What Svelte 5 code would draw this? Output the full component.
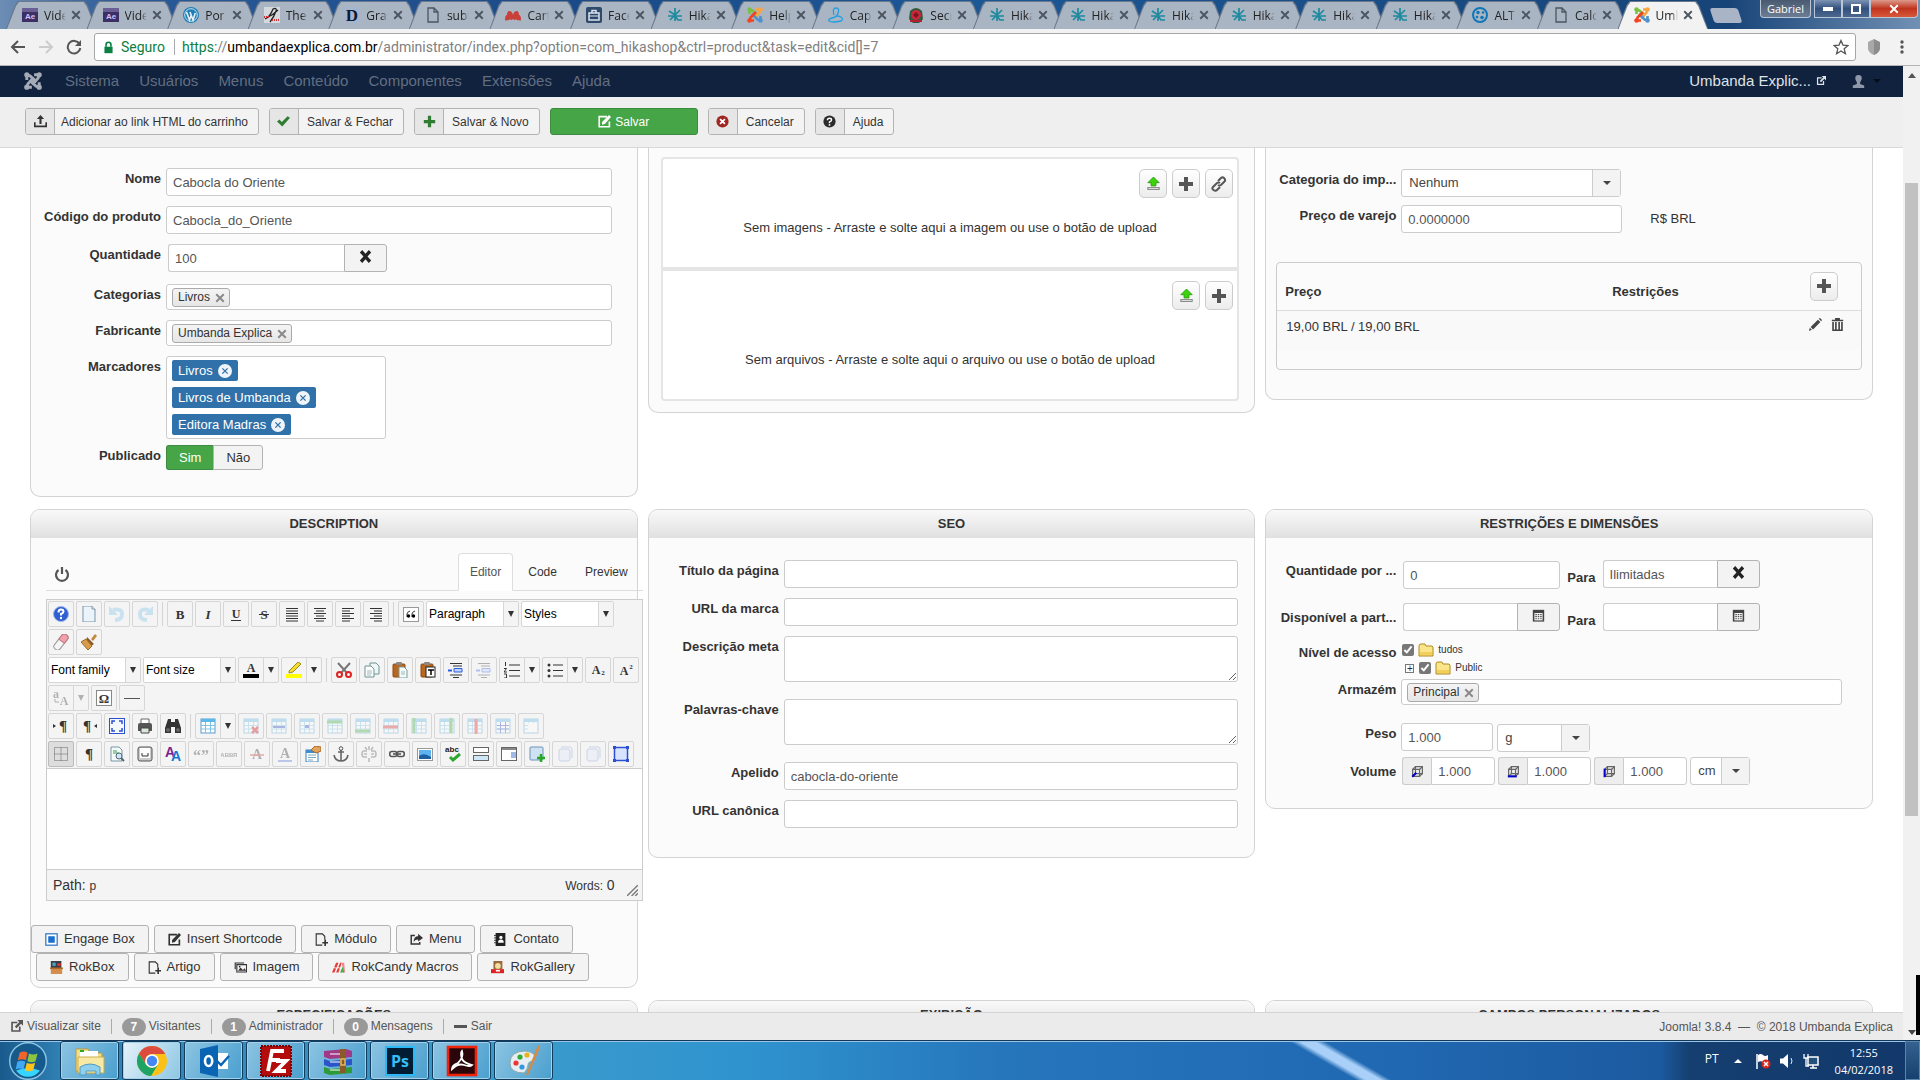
<script lang="ts">
  type Tool = { icon?: string; list?: string; split?: boolean; off?: boolean; active?: boolean; sep?: boolean };

  const browserTabs = [
    { icon: 'ae', title: 'Vide' },
    { icon: 'ae', title: 'Vide' },
    { icon: 'wordpress', title: 'Por' },
    { icon: 'script', title: 'The' },
    { icon: 'letterD', title: 'Gras' },
    { icon: 'page', title: 'subt' },
    { icon: 'cart', title: 'Cart' },
    { icon: 'bag', title: 'Face' },
    { icon: 'hika', title: 'Hika' },
    { icon: 'joomla', title: 'Help' },
    { icon: 'cap', title: 'Cap' },
    { icon: 'crest', title: 'Secr' },
    { icon: 'hika', title: 'Hika' },
    { icon: 'hika', title: 'Hika' },
    { icon: 'hika', title: 'Hika' },
    { icon: 'hika', title: 'Hika' },
    { icon: 'hika', title: 'Hika' },
    { icon: 'hika', title: 'Hika' },
    { icon: 'alt', title: 'ALT' },
    { icon: 'page', title: 'Calc' },
    { icon: 'joomla', title: 'Umb' }
  ];

  const menu = ['Sistema', 'Usuários', 'Menus', 'Conteúdo', 'Componentes', 'Extensões', 'Ajuda'];

  const sep: Tool = { sep: true };
  const toolRows: Tool[][] = [
    [
      { icon: 'help' }, { icon: 'newdoc' }, { icon: 'undo', off: true }, { icon: 'redo', off: true }, sep,
      { icon: 'bold' }, { icon: 'italic' }, { icon: 'underline' }, { icon: 'strike' },
      { icon: 'justify' }, { icon: 'center' }, { icon: 'left' }, { icon: 'right' }, sep,
      { icon: 'quote' }, { list: 'Paragraph' }, { list: 'Styles' }
    ],
    [{ icon: 'eraser' }, { icon: 'brush' }],
    [
      { list: 'Font family' }, { list: 'Font size' }, { icon: 'forecolor', split: true }, { icon: 'highlight', split: true }, sep,
      { icon: 'cut' }, { icon: 'copy' }, { icon: 'paste' }, { icon: 'pastetext' }, { icon: 'indent' }, { icon: 'indent', off: true },
      { icon: 'ol', split: true }, { icon: 'ul', split: true }, { icon: 'sub' }, { icon: 'sup' }
    ],
    [{ icon: 'textcase', split: true, off: true }, { icon: 'omega' }, { icon: 'rule' }],
    [
      { icon: 'ltr' }, { icon: 'rtl' }, { icon: 'fullscreen' }, { icon: 'print' }, { icon: 'find' }, sep,
      { icon: 'table', split: true }, { icon: 'tabledel', off: true }, { icon: 'tablerow', off: true }, { icon: 'tablecell', off: true },
      { icon: 'rowbefore', off: true }, { icon: 'rowafter', off: true }, { icon: 'rowdel', off: true }, { icon: 'colbefore', off: true },
      { icon: 'colafter', off: true }, { icon: 'coldel', off: true }, { icon: 'tablesplit', off: true }, { icon: 'tablemerge', off: true }
    ],
    [
      { icon: 'guides', active: true }, { icon: 'pilcrow' }, { icon: 'preview' }, { icon: 'nbsp' }, { icon: 'styleprops' },
      { icon: 'cite', off: true }, { icon: 'abbr', off: true }, { icon: 'del', off: true }, { icon: 'ins', off: true }, { icon: 'attribs' },
      { icon: 'anchor' }, { icon: 'unlink', off: true }, { icon: 'chain' }, { icon: 'picture' }, { icon: 'spell' },
      { icon: 'pagebreak' }, { icon: 'readmore' }, { icon: 'layeradd' }, { icon: 'layer', off: true }, { icon: 'layer', off: true }, { icon: 'layerabs' }
    ]
  ];

  const insertRows = [
    [
      { icon: 'engage', label: 'Engage Box' },
      { icon: 'edit', label: 'Insert Shortcode' },
      { icon: 'fileadd', label: 'Módulo' },
      { icon: 'share', label: 'Menu' },
      { icon: 'contact', label: 'Contato' }
    ],
    [
      { icon: 'rokbox', label: 'RokBox' },
      { icon: 'fileadd', label: 'Artigo' },
      { icon: 'image', label: 'Imagem' },
      { icon: 'candy', label: 'RokCandy Macros' },
      { icon: 'gallery', label: 'RokGallery' }
    ]
  ];

  const taskbar = ['explorer', 'chrome', 'outlook', 'filezilla', 'winrar', 'photoshop', 'acrobat', 'paint'];

  let publicado = $state('sim');

  const serif = 'font-family="Liberation Serif, serif" font-weight="bold" text-anchor="middle" fill="#333"';
  const grid = '<rect x="1" y="1" width="14" height="14" fill="#fff" stroke="#5a9cc8"/><rect x="1" y="1" width="14" height="3" fill="#5bb8ea"/><path d="M1 7.500h14M1 11h14M5.500 4v11M10.500 4v11" stroke="#7cc3e6"/>';
  const clip = '<rect x="1" y="2" width="12" height="13" rx="1" fill="#b8691f" stroke="#8c4a10"/><rect x="4" y="0" width="6" height="3" rx="1" fill="#888"/>';
  const joomlaArms = (a: string, b: string, c: string, d: string) =>
    `<g fill="none" stroke-width="2.600"><path d="M2.500 7V4.500q.500-2 3-1l5.500 5.500" stroke="${a}"/><path d="M9 2.500h2.500q2 .500 1 3L7 11" stroke="${b}"/><path d="M13.500 9v2.500q-.500 2-3 1L5 7" stroke="${c}"/><path d="M7 13.500H4.500q-2-.500-1-3L9 5" stroke="${d}"/></g><circle cx="2.500" cy="2.500" r="2.300" fill="${a}"/><circle cx="13.500" cy="2.500" r="2.300" fill="${b}"/><circle cx="13.500" cy="13.500" r="2.300" fill="${c}"/><circle cx="2.500" cy="13.500" r="2.300" fill="${d}"/>`;
  const cube = (edge: string) =>
    `<g fill="none" stroke="#666" stroke-width="1.500"><path d="M2 5.500h8.500v8.500H2z"/><path d="M5.500 2H14v8.500H5.500z"/><path d="M2 5.500L5.500 2M10.500 5.500L14 2M10.500 14L14 10.500M2 14l3.500-3.500"/></g><path d="${edge}" stroke="#0000d0" stroke-width="2.500"/>`;

  // every drawing uses a 16 by 16 box
  const icons: Record<string, string> = {
    ae: '<rect y="1" width="16" height="14" fill="#3b2f63"/><rect y="1" width="16" height="4" fill="#6a5f95"/><text x="8" y="12" font-size="8" font-weight="bold" text-anchor="middle" fill="#cfc3ff" font-family="Liberation Sans, sans-serif">Ae</text>',
    wordpress: '<circle cx="8" cy="8" r="8" fill="#1e7fb5"/><circle cx="8" cy="8" r="6.300" fill="none" stroke="#cfe2ee"/><path d="M3.500 5l3 8 1.800-5M7 5l3 8 2.300-7" fill="none" stroke="#e6f0f6" stroke-width="1.600"/>',
    script: '<rect width="16" height="16" fill="#d5d8dc"/><path d="M1 12q5-2 8-10 4-2 3 2-2 6-6 11M4 10q5-2 10-7" fill="none" stroke="#222" stroke-width="1.300"/><path d="M0 10h5M8 13h7" stroke="#c33" stroke-width="2" stroke-dasharray="1 1"/>',
    letterD: '<rect width="16" height="16" fill="#a3b5cf"/><text x="8" y="14" font-size="17" text-anchor="middle" font-weight="bold" fill="#101a33" font-family="Liberation Serif, serif">D</text>',
    page: '<path d="M3 1h6l4 4v10H3zM9 1v4h4" fill="none" stroke="#4c5560" stroke-width="1.300"/>',
    cart: '<path d="M0 13Q0 8 2 8q0-4 2.500-4Q7 4 8 8q1-4 3.500-4T14 8q2 0 2 5-1 1-2 0-2 1-3-1-1 2-3 0-2 2-3 0-1 2-3 1-1 1-2 0z" fill="#c9403a"/>',
    bag: '<rect width="16" height="16" rx="2" fill="#2e4a6b"/><path d="M3 6h10v7H3zM6 6V3.500h4V6" fill="none" stroke="#dbe4ee" stroke-width="1.500"/><path d="M3 9h10" stroke="#dbe4ee"/>',
    hika: '<path d="M8 1v13M2 4l6 4 5-5M1 9h14M8 8l-5 5M8 9l3 4h4" fill="none" stroke="#1d8a9f" stroke-width="1.700"/>',
    joomla: joomlaArms('#7ac143', '#f9a541', '#5091cd', '#f44321'),
    joomlaMono: joomlaArms('#a4abb7', '#a4abb7', '#a4abb7', '#a4abb7'),
    cap: '<path d="M6 8Q4 1 8 1t2 5q-1 4-6 5-4 1-3 3 3 2 12 0 3-2 0-4-4-2-6 0" fill="none" stroke="#1f9fe0" stroke-width="1.300"/>',
    crest: '<path d="M2 4q6-6 12 0l1 8-4 4H5l-4-4z" fill="#2d5a3a"/><circle cx="8" cy="8" r="5" fill="#c9283c"/><path d="M5 8l3-3 3 3-3 3z" fill="#7a1426"/><path d="M2 14h12" stroke="#b02030" stroke-width="2"/>',
    alt: '<circle cx="8" cy="8" r="7" fill="none" stroke="#0f76b8" stroke-width="2"/><g fill="#0f76b8"><circle cx="6" cy="5.500" r="1.700"/><circle cx="11" cy="5.500" r="1.300"/><circle cx="5" cy="10" r="1.300"/><circle cx="10" cy="10.500" r="1.800"/></g>',
    back: '<path d="M15 8H2M8 2L2 8l6 6" fill="none" stroke="#555" stroke-width="2"/>',
    forward: '<path d="M1 8h13M8 2l6 6-6 6" fill="none" stroke="#ccc" stroke-width="2"/>',
    reload: '<path d="M13.500 5A6.300 6.300 0 1 0 14.300 9" fill="none" stroke="#555" stroke-width="2"/><path d="M15 1v6H9z" fill="#555"/>',
    lock: '<rect x="3" y="7" width="10" height="8" fill="#0b8043"/><path d="M5 7V4.500q0-3 3-3t3 3V7" fill="none" stroke="#0b8043" stroke-width="2"/>',
    star: '<path d="M8 1.500l2 4.600 5 .400-3.800 3.300 1.200 4.900L8 12l-4.400 2.700 1.200-4.900L1 6.500l5-.400z" fill="none" stroke="#555" stroke-width="1.300"/>',
    shield: '<path d="M8 0l6 3v7q-1 4-6 6z" fill="#8c8c8c"/><path d="M8 0L2 3v7q1 4 6 6z" fill="#a8a8a8"/>',
    dots: '<g fill="#555"><circle cx="8" cy="3" r="1.700"/><circle cx="8" cy="8" r="1.700"/><circle cx="8" cy="13" r="1.700"/></g>',
    external: '<path d="M9 3H2.500v10.500H12V8" fill="none" stroke="currentColor" stroke-width="2"/><path d="M9 0h7v7l-2.500-2.500L8 10 6 8l5.500-5.500z" fill="currentColor"/>',
    user: '<path d="M8 0q4 0 4 4 0 3-2 5v2l5 2v3H1v-3l5-2V9Q4 7 4 4q0-4 4-4z" fill="#8f98a8"/>',
    upload: '<path d="M8 0l4.500 5H9.300v6H6.700V5H3.500z" fill="#333"/><path d="M1 9v5h14V9" fill="none" stroke="#333" stroke-width="2"/>',
    check: '<path d="M0 8l3-2.500 3 3L13 1.500l3 2L6.500 14z" fill="#2f7d32"/>',
    plusgreen: '<path d="M6 1h4v5h5v4h-5v5H6v-5H1V6h5z" fill="#2f7d32"/>',
    plus: '<path d="M6 1h4v5h5v4h-5v5H6v-5H1V6h5z" fill="#555"/>',
    edit: '<path d="M11 2H1.500v12.500H14V8" fill="none" stroke="currentColor" stroke-width="2"/><path d="M5 12V8.500L13.500 0 16 2.500 8.500 11z" fill="currentColor"/>',
    cancel: '<circle cx="8" cy="8" r="7.500" fill="#a02622"/><path d="M5 5l6 6M11 5l-6 6" stroke="#fff" stroke-width="2.200"/>',
    question: '<circle cx="8" cy="8" r="7.500" fill="#2b2b2b"/><path d="M5.500 6.500q0-2.500 2.500-2.500t2.500 2q0 1.500-2.500 2.500v1.500" fill="none" stroke="#fff" stroke-width="1.800"/><circle cx="8" cy="12.200" r="1.100" fill="#fff"/>',
    green: '<path d="M8 0l7 7h-4v4H5V7H1z" fill="#3bd40b" stroke="#259607"/><rect x="1" y="13" width="14" height="2.500" fill="#ddd" stroke="#777"/>',
    link: '<g fill="none" stroke="#555" stroke-width="2"><path d="M7 5l3-3q1.500-1.500 3 0t1 3l-4 4q-1.500 1-3 0"/><path d="M9 11l-3 3q-1.500 1.500-3.500 0T2 11l4-4q1.500-1 3 0"/></g>',
    pencil: '<path d="M0 16l1-4 2.500 2.500zM2 11L11 2l3 3-9 9zM12 1l1.500-1L16 2.500 15 4z" fill="#444"/>',
    trash: '<path d="M1 2h14v2H1zM5 0h6v2H5z" fill="#444"/><path d="M2.500 5v10h11V5M6 5v10M10 5v10" fill="none" stroke="#444" stroke-width="2"/>',
    cross: '<path d="M1 3l3-3 4 4.500L12 0l3 3-4.500 5 4.500 5-3 3-4-4.500L4 16l-3-3 4.500-5z" fill="#222"/>',
    smallx: '<path d="M2 2l12 12M14 2L2 14" stroke="currentColor" stroke-width="3"/>',
    pillx: '<circle cx="8" cy="8" r="8" fill="#eef4f9"/><path d="M5 5l6 6M11 5l-6 6" stroke="#2f6fa7" stroke-width="1.500"/>',
    power: '<path d="M4.500 4a6 6 0 1 0 7 0M8 1v7" fill="none" stroke="#555" stroke-width="2.200"/>',
    calendar: '<path d="M1 1h14v14.500H1z" fill="#444"/><path d="M3 5h10v9H3z" fill="#fff"/><path d="M4 7h8M4 9.500h8M4 12h8" stroke="#555" stroke-width="1.500" stroke-dasharray="2 1"/>',
    folder: '<path d="M1 4q0-2 2-2h4l1 2h6l1 1v9H1z" fill="#fbe58a" stroke="#b08a1c"/><path d="M2 10h12v3H2z" fill="#f3cf5a"/>',
    cubeA: cube('M1.500 14.500l5-5'),
    cubeB: cube('M1 14h11'),
    cubeC: cube('M2 4.500V15'),
    help: '<circle cx="8" cy="8" r="7.500" fill="#2f5fd0" stroke="#9bb4ea"/><path d="M5.500 6.500q0-3 2.500-3t2.500 2q0 1.500-2.500 2.500V9.500" fill="none" stroke="#fff" stroke-width="2"/><circle cx="8" cy="12" r="1.200" fill="#fff"/>',
    newdoc: '<path d="M2 0h9l3 3v13H2z" fill="#eaf4fa" stroke="#7b95a6"/><path d="M11 0v3h3" fill="#fff" stroke="#7b95a6"/>',
    undo: '<path d="M4 4q9-2 9 4t-7 6" fill="none" stroke="#7fc0ea" stroke-width="4"/><path d="M0 0v9h9z" fill="#7fc0ea"/>',
    redo: '<path d="M12 4Q3 2 3 8t7 6" fill="none" stroke="#7fc0ea" stroke-width="4"/><path d="M16 0v9H7z" fill="#7fc0ea"/>',
    bold: `<text x="8" y="13" font-size="13" ${serif}>B</text>`,
    italic: `<text x="8" y="13" font-size="13" font-style="italic" ${serif}>I</text>`,
    underline: `<text x="8" y="12" font-size="12" ${serif}>U</text><path d="M3 14.500h10" stroke="#333"/>`,
    strike: `<text x="8" y="13" font-size="13" ${serif}>S</text><path d="M3 8.500h10" stroke="#333"/>`,
    justify: '<path d="M2 2.500h12M2 5h12M2 7.500h12M2 10h12M2 12.500h12M2 15h12" stroke="#333"/>',
    center: '<path d="M2 2.500h12M4 5h8M2 7.500h12M4 10h8M2 12.500h12M4 15h8" stroke="#333"/>',
    left: '<path d="M2 2.500h12M2 5h8M2 7.500h12M2 10h8M2 12.500h12M2 15h8" stroke="#333"/>',
    right: '<path d="M2 2.500h12M6 5h8M2 7.500h12M6 10h8M2 12.500h12M6 15h8" stroke="#333"/>',
    quote: '<rect x=".500" y="1.500" width="15" height="14" fill="#fff" stroke="#999"/><path d="M4 11V8q0-2 3-3M9 11V8q0-2 3-3" fill="none" stroke="#333"/><circle cx="5.500" cy="10" r="1.700"/><circle cx="10.500" cy="10" r="1.700"/>',
    eraser: '<g transform="rotate(-52 8 8)"><rect x="-1" y="4.500" width="18" height="7" rx="3" fill="#f5f5f5" stroke="#999"/><path d="M9 4.500h5q3 0 3 3.500t-3 3.500H9z" fill="#f2a0ac" stroke="#c07a86"/></g>',
    brush: '<path d="M10 5l4-5 2 2-4 5z" fill="#c48a3c"/><path d="M6 3l7 7-3 2-5-5z" fill="#8a5a2a"/><path d="M5 5L0 8l7 8 4-4z" fill="#d79b4a" stroke="#9c6a2a"/>',
    forecolor: `<text x="8" y="10" font-size="12" ${serif}>A</text><rect y="12" width="16" height="4"/>`,
    highlight: '<path d="M3 9L12 0l3 2-8 8-4 1z" fill="#f4dd28" stroke="#9c8a20"/><rect y="12" width="16" height="4" fill="#ff0"/>',
    cut: '<path d="M2 1l9 10M14 1L5 11" stroke="#777" stroke-width="2"/><circle cx="3.500" cy="12.500" r="2.500" fill="none" stroke="#d22" stroke-width="2"/><circle cx="12.500" cy="12.500" r="2.500" fill="none" stroke="#d22" stroke-width="2"/>',
    copy: '<path d="M6 1h6l3 3v8H6z" fill="#eef7f7" stroke="#6f9494"/><path d="M1 4h6l3 3v8H1z" fill="#fff" stroke="#6f9494"/><path d="M3 9h5M3 11h5M3 13h4" stroke="#9fb8b8"/>',
    paste: `${clip}<path d="M7 5h5l3 3v8H7z" fill="#f2fafa" stroke="#7e9c9c"/><path d="M9 10h4M9 12h4" stroke="#9fb8b8"/>`,
    pastetext: `${clip}<rect x="6" y="5" width="9" height="10" fill="#fff" stroke="#222"/><path d="M8 8h6M11 8v5" stroke="#000" stroke-width="1.500"/>`,
    indent: '<path d="M2 1.500h12M5 4h9M2 13h12M5 15.500h6" stroke="#333"/><path d="M6 6.500h8v3.500H6z" fill="#bcd2ff" stroke="#2c5fe0"/><path d="M0 8.500h4" stroke="#2c5fe0" stroke-width="2"/>',
    ol: '<path d="M5 3h11M5 8.500h11M5 14h11" stroke="#333"/><path d="M1.500 0v4M0 6.500h2.500L0 10h3M0 12h2.500v4H0" fill="none" stroke="#333"/>',
    ul: '<path d="M6 3h10M6 8.500h10M6 14h10" stroke="#333"/><g fill="#333"><circle cx="2" cy="3" r="1.500"/><circle cx="2" cy="8.500" r="1.500"/><circle cx="2" cy="14" r="1.500"/></g>',
    sub: `<text x="6" y="12" font-size="12" ${serif}>A</text><text x="13" y="13" font-size="7" ${serif}>2</text>`,
    sup: `<text x="6" y="13" font-size="12" ${serif}>A</text><text x="13" y="7" font-size="7" ${serif}>2</text>`,
    textcase: `<text x="3" y="8" font-size="12" ${serif}>a</text><text x="11" y="15" font-size="12" ${serif}>A</text><path d="M2 9v3h4" fill="none" stroke="#333"/>`,
    omega: `<rect x=".500" y=".500" width="15" height="15" fill="#fff" stroke="#888"/><text x="8" y="13" font-size="13" ${serif}>Ω</text>`,
    rule: '<path d="M0 8.500h16" stroke="#555"/>',
    ltr: `<text x="10" y="13" font-size="15" ${serif}>¶</text><path d="M0 6l3 2-3 2z" fill="#333"/>`,
    rtl: `<text x="6" y="13" font-size="15" ${serif}>¶</text><path d="M16 6l-3 2 3 2z" fill="#333"/>`,
    fullscreen: '<rect x=".500" y=".500" width="15" height="15" fill="#f4f8ff" stroke="#2b4fd0"/><path d="M3 6V3h3M10 3h3v3M13 10v3h-3M6 13H3v-3" fill="none" stroke="#2b4fd0" stroke-width="1.500"/>',
    print: '<path d="M4 1h8v6H4z" fill="#fff" stroke="#666"/><path d="M1 7q0-2 2-2h10q2 0 2 2v6H1z" fill="#555"/><path d="M4 10h8v5H4z" fill="#dde8dd" stroke="#444"/>',
    find: '<path d="M3 1h3v3h4V1h3l3 9v5H10V9H6v6H0v-5z" fill="#333"/><circle cx="3" cy="12" r="2" fill="#666"/><circle cx="13" cy="12" r="2" fill="#666"/>',
    table: grid,
    tabledel: `${grid}<path d="M9 9l6 6M15 9l-6 6" stroke="#c00" stroke-width="2.500"/>`,
    tablerow: `${grid}<path d="M2 9h12" stroke="#2446c0" stroke-width="2"/>`,
    tablecell: `${grid}<rect x="6" y="7" width="4" height="3" fill="#2446c0"/>`,
    rowbefore: `${grid}<path d="M0 4h15" stroke="#3a3" stroke-width="3"/>`,
    rowafter: `${grid}<path d="M0 13h15" stroke="#3a3" stroke-width="3"/>`,
    rowdel: `${grid}<path d="M0 9h15" stroke="#d22" stroke-width="3"/>`,
    colbefore: `${grid}<path d="M3 0v15" stroke="#3a3" stroke-width="3"/>`,
    colafter: `${grid}<path d="M12 0v15" stroke="#3a3" stroke-width="3"/>`,
    coldel: `${grid}<path d="M9 1v15" stroke="#d22" stroke-width="3"/>`,
    tablesplit: `${grid}<path d="M2 7.500h12M2 11h12M5.500 4v11M10.500 4v11" stroke="#2446c0"/>`,
    tablemerge: `${grid}<rect x="5" y="5" width="9" height="9" fill="#fff"/>`,
    guides: '<path d="M1.500 1.500h13v13h-13zM8 1.500v13M1.500 8h13" fill="none" stroke="#666" stroke-dasharray="1 1"/>',
    pilcrow: `<text x="8" y="13" font-size="15" ${serif}>¶</text>`,
    preview: '<path d="M2 1h8l3 3v11H2z" fill="#f2fafa" stroke="#7b95a6"/><path d="M4 5h4M4 7h6" stroke="#3aa050"/><circle cx="10" cy="10" r="3" fill="#cfe6f7" stroke="#567"/><path d="M12 12l3 3" stroke="#567" stroke-width="2"/>',
    nbsp: '<rect x="1" y="1" width="14" height="14" rx="2" fill="#ccc" stroke="#555"/><rect x="3" y="2" width="10" height="10" fill="#fff"/><path d="M5 7v3h6V7" fill="none" stroke="#333"/>',
    styleprops: '<text x="5" y="11" font-size="14" font-weight="bold" text-anchor="middle" font-family="Liberation Sans, sans-serif" fill="#7a1f8f">A</text><text x="11" y="15" font-size="14" font-weight="bold" text-anchor="middle" font-family="Liberation Sans, sans-serif" fill="#1478d4">A</text>',
    cite: '<text x="8" y="15" font-size="16" font-weight="bold" text-anchor="middle" font-family="Liberation Serif, serif" fill="#333">“”</text>',
    abbr: '<text x="8" y="11" font-size="6" font-weight="bold" text-anchor="middle" font-family="Liberation Sans, sans-serif" fill="#333">ABBR</text>',
    del: `<text x="8" y="13" font-size="14" ${serif}>A</text><path d="M1 9h14" stroke="#c22" stroke-width="1.500"/>`,
    ins: `<text x="8" y="12" font-size="14" ${serif}>A</text><path d="M1 15h14" stroke="#24c" stroke-width="1.500"/>`,
    attribs: '<rect x="1" y="4" width="12" height="12" fill="#fff" stroke="#3b7fc0"/><path d="M1 4h12v3H1z" fill="#3b8fd0"/><path d="M3 9h8M3 11.500h8M3 14h5" stroke="#7ab"/><path d="M6 4l4-4 6 1v4l-5 2z" fill="#e3a45c" stroke="#a8682a"/>',
    anchor: '<path d="M8 4v11M5 6h6M1 9q1 6 7 6t7-6" fill="none" stroke="#666" stroke-width="1.600"/><circle cx="8" cy="2.500" r="1.800" fill="none" stroke="#555"/>',
    unlink: '<g fill="none" stroke="#555" stroke-width="1.600"><path d="M6 5H3q-2 0-2 3t2 3h3M10 5h3q2 0 2 3t-2 3h-3M3 8h3M10 8h3M8 0v4M8 12v4M4 1l2 3M12 1l-2 3"/></g>',
    chain: '<g fill="none" stroke="#555" stroke-width="1.600"><rect x=".800" y="5.500" width="7" height="5" rx="2"/><rect x="8.200" y="5.500" width="7" height="5" rx="2"/><path d="M4 8h8"/></g>',
    picture: '<rect x=".500" y="2.500" width="15" height="12" fill="#fff" stroke="#999"/><rect x="2" y="4" width="12" height="9" fill="#5fb4f0"/><path d="M2 10q5-4 12 1v2H2z" fill="#1d5fa0"/>',
    spell: '<text x="7" y="6" font-size="8" font-weight="bold" text-anchor="middle" font-family="Liberation Sans, sans-serif" fill="#222">abc</text><path d="M5 11l3 3 7-6" fill="none" stroke="#2fa82f" stroke-width="3"/>',
    pagebreak: '<rect x=".500" y="1.500" width="15" height="5" fill="#fff" stroke="#666"/><rect x=".500" y="9.500" width="15" height="5" fill="#cfe8f8" stroke="#666"/>',
    readmore: '<rect x=".500" y="1.500" width="15" height="13" fill="#fff" stroke="#666"/><path d="M1 3h14" stroke="#888" stroke-width="2"/><path d="M10 7h5M10 9h5M10 11h5" stroke="#47c"/>',
    layeradd: '<rect x="1" y="1" width="13" height="13" rx="1" fill="#cfe2f4" stroke="#6f94b8"/><path d="M12 8v8M8 12h8" stroke="#2a2" stroke-width="2.500"/>',
    layer: '<rect x="2" y="3" width="11" height="12" rx="2" fill="#dfe7fb" stroke="#7f96d0"/><path d="M4 1h9q2 0 2 2v9" fill="none" stroke="#7f96d0"/>',
    layerabs: '<rect x="1.500" y="1.500" width="13" height="13" fill="#d8e4ff" stroke="#2b4fd0" stroke-width="1.500"/><g fill="#2b4fd0"><path d="M0 0h3v3H0zM13 0h3v3h-3zM0 13h3v3H0zM13 13h3v3h-3z"/></g>',
    engage: '<rect x="1" y="1" width="14" height="14" fill="#fff" stroke="#2d74c4" stroke-width="1.500"/><rect x="4" y="4" width="8" height="8" fill="#1b6fd0"/>',
    fileadd: '<path d="M9 15H1.500V1H9l3 3v4" fill="none" stroke="#333" stroke-width="1.400"/><path d="M12.500 8v8M9 12h7" stroke="#333" stroke-width="2"/>',
    share: '<path d="M6 3H1.500v10.500H12V11" fill="none" stroke="#333" stroke-width="1.800"/><path d="M10 1l6 5-6 4.500V8Q6 8 4.500 11 4.500 4 10 4z" fill="#333"/>',
    contact: '<path d="M2 0h12v16H2z" fill="#222"/><path d="M0 3h3M0 6h3M0 9h3M0 12h3" stroke="#222"/><circle cx="8.500" cy="5.500" r="2" fill="#fff"/><path d="M5 12q0-4 3.500-4T12 12z" fill="#fff"/>',
    rokbox: '<path d="M1 9h14v7H1z" fill="#d48f4e"/><rect x="1" y="0" width="13" height="9" fill="#3c3c44"/><path d="M3 2h4v4H3z" fill="#4ac"/><path d="M9 3h4v3H9z" fill="#e33"/><path d="M0 9h16" stroke="#b06a2a" stroke-width="2"/>',
    image: '<path d="M1.500 10V2.500h11M3.500 4.500h12v9h-12z" fill="none" stroke="#333" stroke-width="1.400"/><path d="M5 12l3-4 3 3 2-2 2 3z" fill="#333"/><circle cx="7" cy="7" r="1"/>',
    candy: '<path d="M0 14L5 2h3L3 14zM5 14l5-12h2L8 14z" fill="#e43b3b"/><path d="M2 8l4 1M7 8l4 1" stroke="#fff"/><path d="M12 2l3 0 1 12h-2z" fill="#e88"/><path d="M10 14l3-7 2 7z" fill="#4a4"/>',
    gallery: '<path d="M0 10h16v5H0z" fill="#d22"/><rect x="3" y="0" width="11" height="10" fill="#9a6a3c"/><circle cx="8.500" cy="6" r="3.500" fill="#f2dfa0"/><path d="M6 12h5" stroke="#fff" stroke-width="2"/>',
    explorer: '<path d="M1 2h6l1 2h6v9H1z" fill="#f2df8c" stroke="#b99b3c" stroke-width=".500"/><path d="M3 3h9v3H3z" fill="#fff"/><path d="M3 3h2" stroke="#2a2"/><path d="M2 6h13v8H2z" fill="#f8e9a5" stroke="#c9ac4c" stroke-width=".500"/><path d="M3 11q5-3 10 0v4h-2v-2H6v2H3z" fill="#8fd0ee" stroke="#4f9cc4" stroke-width=".500"/>',
    chrome: '<circle cx="8" cy="8" r="7.500" fill="#fbc116"/><path d="M1.500 4.200A7.500 7.500 0 0 1 14.600 4.500H8A3.500 3.500 0 0 0 5 9.700z" fill="#dd4b3e"/><path d="M1.500 4.200A7.500 7.500 0 0 0 7.500 15.500L11 9.700Q8 13 5 9.700z" fill="#1da362"/><circle cx="8" cy="8" r="3.400" fill="#fff"/><circle cx="8" cy="8" r="2.600" fill="#4587f3"/>',
    outlook: '<path d="M9 4h6v8H9z" fill="#fff"/><path d="M9.500 8l2 2 4-4.500" fill="none" stroke="#0a64b4" stroke-width="1.200"/><path d="M1 2l9-2v16l-9-2z" fill="#0a64b4"/><ellipse cx="5.300" cy="8" rx="1.800" ry="2.500" fill="none" stroke="#fff" stroke-width="1.300"/>',
    filezilla: '<rect x=".500" y=".500" width="15" height="15" fill="#b40c0c" stroke="#7c0000" stroke-dasharray="1 .500"/><path d="M4 13L6 3h6M5 7.500h5M8 8h5l-5 5h5" fill="none" stroke="#fff" stroke-width="1.900"/>',
    winrar: '<path d="M1 3l11-1 3 1v3L4 7 1 6z" fill="#a03a86"/><path d="M1 7l3 1 11-1v3L4 11 1 10z" fill="#2a55c8"/><path d="M1 11l3 1 11-1v3L4 15l-3-1z" fill="#2f9a3a"/><path d="M4 4.500h5M4 8.500h5M4 12.500h5" stroke="#fff" stroke-width=".600"/><path d="M9 2h3v12H9z" fill="#8a5a28"/><rect x="9.500" y="7" width="2" height="3" fill="none" stroke="#e8c060" stroke-width=".700"/>',
    photoshop: '<rect x="1" y="1" width="14" height="14" fill="#001d34" stroke="#2cb8f5" stroke-width="1"/><text x="8" y="11" font-size="8" text-anchor="middle" fill="#38bdf8" font-weight="bold" font-family="Open Sans, sans-serif">Ps</text>',
    acrobat: '<rect x="1" y="1" width="14" height="14" fill="#2a0509" stroke="#f0240c" stroke-width="1.300"/><path d="M8 3q-1 1 0 4 1 2 5 3-1 1-4 0t-6 2q0-2 3-3 3-3 2-6z" fill="none" stroke="#fff" stroke-width=".900"/>',
    paint: '<path d="M1 9q0-6 8-6 6 1 4 5-3 0-3 2t-2 4Q1 14 1 9z" fill="#e6eef4" stroke="#8aa" stroke-width=".500"/><circle cx="4" cy="9" r="1.300" fill="#e33"/><circle cx="6" cy="6" r="1.300" fill="#3a3"/><circle cx="9.500" cy="5" r="1.300" fill="#e9b320"/><circle cx="7" cy="11" r="1.300" fill="#39d"/><path d="M9 15l4-10 2-5 1 1-2 5-4 9z" fill="#d98a3c"/>',
    start: '<circle cx="8" cy="8" r="7.700" fill="#165a8c" stroke="#8cc4e4" stroke-width=".600"/><path d="M3 12a6 6 0 0 0 10 0q-5-2-10 0z" fill="#35d5ff"/><path d="M4.500 4.500q1.700-1 3.300 0l-.700 3.200q-1.600-.800-3.400 0z" fill="#f2652a"/><path d="M8.400 4.800q1.800.900 3.600 0l-.800 3.300q-1.700.800-3.500 0z" fill="#8cc63f"/><path d="M3.500 8.300q1.800-.900 3.400 0l-.800 3.300q-1.600-.900-3.300 0z" fill="#3fa9f5"/><path d="M7.500 8.700q1.800.900 3.500 0l-.800 3.200q-1.700.900-3.500 0z" fill="#fcc21b"/>',
    flag: '<path d="M2 1v15" stroke="#fff" stroke-width="1.500"/><path d="M3 2q3-2 5 0t5 0v7q-3 1.500-5 0t-5 0z" fill="#fff"/><circle cx="11" cy="11" r="4.500" fill="#d9261c"/><path d="M9 9l4 4M13 9l-4 4" stroke="#fff" stroke-width="1.500"/>',
    sound: '<path d="M1 5.500h3L9 1v14l-5-4.500H1z" fill="#fff"/><path d="M12 5q2 3 0 6" fill="none" stroke="#dce8f4"/>',
    network: '<path d="M5 4h10v8H5zM7 15h7M10 12v3" fill="#24507c" stroke="#fff" stroke-width="1.500"/><path d="M1 1v4h4V1M3 5v8h3" fill="none" stroke="#fff" stroke-width="1.300"/>'
  };
</script>

{#snippet icon(name: string, size = 'md')}
  <svg class="icon {size}" viewBox="0 0 16 16" aria-hidden="true">{@html icons[name]}</svg>
{/snippet}

{#snippet tag(label: string)}
  <span class="tag">{label}<button aria-label="Remover {label}">{@render icon('smallx', 'xs')}</button></span>
{/snippet}

{#snippet picker(id: string, value: string, cls: string)}
  <span class="picker {cls}">
    <select {id} aria-label={id}><option>{value}</option></select>
    <span class="picker-arrow"><i class="caret"></i></span>
  </span>
{/snippet}

<div class="screen">
  <header class="tabstrip">
    <div class="tabs">
      {#each browserTabs as tab, i}
        <div class="tab" class:current={i === browserTabs.length - 1}>
          {@render icon(tab.icon)}
          <span class="tab-title">{tab.title}</span>
          <button class="tab-close" aria-label="Fechar guia">{@render icon('smallx', 'xs')}</button>
        </div>
      {/each}
    </div>
    <button class="new-tab" aria-label="Nova guia"></button>
    <div class="window-controls">
      <button class="profile">Gabriel</button>
      <button class="win min" aria-label="Minimizar"><i></i></button>
      <button class="win max" aria-label="Restaurar"><i></i></button>
      <button class="win close" aria-label="Fechar">{@render icon('smallx', 'xs')}</button>
    </div>
  </header>

  <div class="addressbar">
    <button aria-label="Voltar">{@render icon('back')}</button>
    <button aria-label="Avançar">{@render icon('forward')}</button>
    <button aria-label="Recarregar">{@render icon('reload')}</button>
    <div class="omnibox">
      {@render icon('lock', 'sm')}
      <span class="secure">Seguro</span>
      <span class="url"><span class="secure">https:</span>//<b>umbandaexplica.com.br</b>/administrator/index.php?option=com_hikashop&amp;ctrl=product&amp;task=edit&amp;cid[]=7</span>
      <button aria-label="Favorito">{@render icon('star')}</button>
    </div>
    <button aria-label="Extensão">{@render icon('shield')}</button>
    <button aria-label="Menu do navegador">{@render icon('dots')}</button>
  </div>

  <div class="viewport">
    <div class="page">
      <nav class="navbar">
        <a class="brand" href="#home" aria-label="Joomla">{@render icon('joomlaMono', 'lg')}</a>
        {#each menu as item}
          <a href="#{item}">{item}</a>
        {/each}
        <a class="site" href="#site">Umbanda Explic... {@render icon('external', 'xs')}</a>
        <a class="account" href="#user" aria-label="Conta">{@render icon('user', 'sm')}<i class="caret"></i></a>
      </nav>

      <div class="subhead">
        <button class="action"><span>{@render icon('upload', 'sm')}</span><em class="tight">Adicionar ao link HTML do carrinho</em></button>
        <button class="action"><span>{@render icon('check', 'sm')}</span><em>Salvar &amp; Fechar</em></button>
        <button class="action"><span>{@render icon('plusgreen', 'sm')}</span><em>Salvar &amp; Novo</em></button>
        <button class="save">{@render icon('edit', 'sm')} Salvar</button>
        <button class="action"><span>{@render icon('cancel', 'sm')}</span><em>Cancelar</em></button>
        <button class="action"><span>{@render icon('question', 'sm')}</span><em>Ajuda</em></button>
      </div>

      <main class="content">
        <section class="panel cut product">
          <div class="row"><label for="nome">Nome</label><input id="nome" value="Cabocla do Oriente" /></div>
          <div class="row"><label for="codigo">Código do produto</label><input id="codigo" value="Cabocla_do_Oriente" /></div>
          <div class="row spaced">
            <label for="quantidade">Quantidade</label>
            <div class="group wide"><input id="quantidade" value="100" /><button aria-label="Ilimitado">{@render icon('cross', 'sm')}</button></div>
          </div>
          <div class="row"><span class="label">Categorias</span><div class="chosen">{@render tag('Livros')}</div></div>
          <div class="row"><span class="label">Fabricante</span><div class="chosen">{@render tag('Umbanda Explica')}</div></div>
          <div class="row close">
            <span class="label">Marcadores</span>
            <div class="pills">
              {#each ['Livros', 'Livros de Umbanda', 'Editora Madras'] as name}
                <span class="pill">{name}<button aria-label="Remover {name}">{@render icon('pillx', 'sm')}</button></span>
              {/each}
            </div>
          </div>
          <div class="row">
            <span class="label">Publicado</span>
            <div class="switch">
              <label class:on={publicado === 'sim'}><input type="radio" name="publicado" value="sim" bind:group={publicado} />Sim</label>
              <label class:on={publicado === 'nao'}><input type="radio" name="publicado" value="nao" bind:group={publicado} />Não</label>
            </div>
          </div>
        </section>

        <section class="panel cut media">
          <div class="drop images">
            <div class="drop-tools">
              <button class="square" aria-label="Upload">{@render icon('green', 'sm')}</button>
              <button class="square" aria-label="Adicionar">{@render icon('plus')}</button>
              <button class="square" aria-label="Link">{@render icon('link')}</button>
            </div>
            <p>Sem imagens - Arraste e solte aqui a imagem ou use o botão de upload</p>
          </div>
          <div class="drop files">
            <div class="drop-tools">
              <button class="square" aria-label="Upload">{@render icon('green', 'sm')}</button>
              <button class="square" aria-label="Adicionar">{@render icon('plus')}</button>
            </div>
            <p>Sem arquivos - Arraste e solte aqui o arquivo ou use o botão de upload</p>
          </div>
        </section>

        <section class="panel cut prices">
          <div class="row tax"><label for="imposto">Categoria do imp...</label>{@render picker('imposto', 'Nenhum', 'p-tax')}</div>
          <div class="row"><label for="varejo">Preço de varejo</label><input id="varejo" class="retail" value="0.0000000" /><span class="currency">R$ BRL</span></div>
          <div class="price-box">
            <table>
              <thead>
                <tr><th>Preço</th><th>Restrições</th><th class="tools"><button class="square" aria-label="Adicionar preço">{@render icon('plus')}</button></th></tr>
              </thead>
              <tbody>
                <tr>
                  <td>19,00 BRL / 19,00 BRL</td><td></td>
                  <td class="tools"><button aria-label="Editar">{@render icon('pencil', 'sm')}</button><button aria-label="Excluir">{@render icon('trash', 'sm')}</button></td>
                </tr>
              </tbody>
            </table>
          </div>
        </section>

        <section class="panel">
          <h2>DESCRIPTION</h2>
          <div class="editor-tabs">
            <button class="toggle" aria-label="Alternar editor">{@render icon('power')}</button>
            <button class="etab current">Editor</button>
            <button class="etab">Code</button>
            <button class="etab">Preview</button>
          </div>
          <div class="editor">
            <div class="tools-area">
              {#each toolRows as tools}
                <div class="tool-row">
                  {#each tools as tool}
                    {#if tool.sep}
                      <i class="sep"></i>
                    {:else if tool.list}
                      <button class="tool list"><span>{tool.list}</span><b><i class="arrow"></i></b></button>
                    {:else}
                      <button class="tool" class:split={tool.split} class:off={tool.off} class:active={tool.active} aria-label={tool.icon}>
                        <span>{@render icon(tool.icon ?? '')}</span>{#if tool.split}<b><i class="arrow"></i></b>{/if}
                      </button>
                    {/if}
                  {/each}
                </div>
              {/each}
            </div>
            <div class="canvas" contenteditable="true" role="textbox" tabindex="0" aria-label="Descrição"></div>
            <div class="path">
              <span>Path: <small>p</small></span>
              <span class="words"><small>Words:</small> 0</span>
              <svg class="grip" viewBox="0 0 12 12" aria-hidden="true"><path d="M0 12L12 0M5 12l7-7M9 12l3-3" stroke="#777" stroke-width="1.500" /></svg>
            </div>
          </div>
          <div class="inserts">
            {#each insertRows as buttons}
              <div class="insert-row">
                {#each buttons as b}
                  <button class="insert">{@render icon(b.icon, 'sm')}{b.label}</button>
                {/each}
              </div>
            {/each}
          </div>
        </section>

        <section class="panel seo">
          <h2>SEO</h2>
          <div class="row"><label for="titulo">Título da página</label><input id="titulo" /></div>
          <div class="row"><label for="marca">URL da marca</label><input id="marca" /></div>
          <div class="row tall"><label for="meta">Descrição meta</label><textarea id="meta"></textarea></div>
          <div class="row tall"><label for="chaves">Palavras-chave</label><textarea id="chaves"></textarea></div>
          <div class="row"><label for="apelido">Apelido</label><input id="apelido" value="cabocla-do-oriente" /></div>
          <div class="row"><label for="canonica">URL canônica</label><input id="canonica" /></div>
        </section>

        <section class="panel limits">
          <h2>RESTRIÇÕES E DIMENSÕES</h2>
          <div class="row apart">
            <label for="qtd">Quantidade por ...</label>
            <input id="qtd" class="qty" value="0" />
            <label class="to" for="max">Para</label>
            <div class="group"><input id="max" value="Ilimitadas" /><button aria-label="Limpar">{@render icon('cross', 'sm')}</button></div>
          </div>
          <div class="row dates">
            <label class="low" for="de">Disponível a part...</label>
            <div class="group"><input id="de" /><button aria-label="Calendário">{@render icon('calendar', 'sm')}</button></div>
            <label class="to" for="ate">Para</label>
            <div class="group"><input id="ate" /><button aria-label="Calendário">{@render icon('calendar', 'sm')}</button></div>
          </div>
          <div class="row access">
            <span class="label low">Nível de acesso</span>
            <div class="tree">
              <label><input type="checkbox" checked />{@render icon('folder')}tudos</label>
              <label><i class="expand">+</i><input type="checkbox" checked />{@render icon('folder')}Public</label>
            </div>
          </div>
          <div class="row store"><span class="label">Armazém</span><div class="chosen">{@render tag('Principal')}</div></div>
          <div class="row weight">
            <label for="peso">Peso</label>
            <input id="peso" class="short" value="1.000" />
            {@render picker('unidade', 'g', 'p-unit')}
          </div>
          <div class="row volume">
            <span class="label low">Volume</span>
            {#each ['cubeA', 'cubeB', 'cubeC'] as side}
              <div class="addon"><span>{@render icon(side, 'sm')}</span><input aria-label={side} value="1.000" /></div>
            {/each}
            {@render picker('medida', 'cm', 'p-cm')}
          </div>
        </section>

        {#each ['ESPECIFICAÇÕES', 'EXIBIÇÃO', 'CAMPOS PERSONALIZADOS'] as title}
          <section class="panel"><h2>{title}</h2></section>
        {/each}
      </main>

      <footer class="status">
        <a href="#view">{@render icon('external', 'sm')} Visualizar site</a>
        <span><b>7</b>Visitantes</span>
        <span><b>1</b>Administrador</span>
        <span><b>0</b>Mensagens</span>
        <a href="#logout"><i class="dash"></i>Sair</a>
        <p>Joomla! 3.8.4 &nbsp;—&nbsp; © 2018 Umbanda Explica</p>
      </footer>
    </div>
    <div class="scrollbar">
      <i class="arrow up"></i>
      <div class="thumb"></div>
      <i class="arrow"></i>
      <div class="edge"></div>
    </div>
  </div>

  <div class="taskbar">
    <button class="start" aria-label="Iniciar">{@render icon('start', 'xl')}</button>
    {#each taskbar as app}
      <button class="app" class:focused={app === 'chrome'} aria-label={app}>{@render icon(app, 'xl')}</button>
    {/each}
    <div class="tray">
      <span class="lang">PT</span>
      <i class="caret-up"></i>
      {@render icon('flag')}
      {@render icon('sound')}
      {@render icon('network')}
      <div class="clock"><span>12:55</span><span>04/02/2018</span></div>
      <button class="desktop" aria-label="Mostrar área de trabalho"></button>
    </div>
  </div>
</div>

<style>
  :global(body) {
    margin: 0;
  }
  .screen {
    display: flex;
    flex-direction: column;
    height: 100vh;
    overflow: hidden;
    font-family: 'Liberation Sans', Arial, sans-serif;
    font-size: 13px;
    line-height: 18px;
    color: #333;
    background: #fff;
  }
  .screen * {
    box-sizing: border-box;
  }
  button,
  input,
  select,
  textarea {
    font: inherit;
    color: inherit;
    margin: 0;
  }
  button {
    padding: 0;
    border: 0;
    background: none;
    display: flex;
    align-items: center;
    justify-content: center;
    white-space: nowrap;
  }
  a {
    color: inherit;
    text-decoration: none;
  }
  .icon {
    width: 16px;
    height: 16px;
    flex: none;
    display: block;
  }
  .icon.xs {
    width: 10px;
    height: 10px;
  }
  .icon.sm {
    width: 13px;
    height: 13px;
  }
  .icon.lg {
    width: 18px;
    height: 18px;
  }
  .icon.xl {
    width: 32px;
    height: 32px;
  }
  .caret {
    border: 4px solid transparent;
    border-top-color: #444;
    border-bottom: 0;
  }
  .arrow {
    border: 3px solid transparent;
    border-top: 6px solid #333;
    border-bottom: 0;
  }

  /* browser chrome */
  .tabstrip {
    display: flex;
    height: 29px;
    flex: none;
    background: linear-gradient(90deg, #6d8db4 0, #2a5a97 120px, #1a4a88 30%, #1c5796 50%, #174478 90%, #7190b4);
  }
  .tabs {
    display: flex;
    flex: 1;
    padding: 1px 10px 0 6px;
    min-width: 0;
  }
  .tab {
    position: relative;
    display: flex;
    flex: 1 1 0;
    align-items: center;
    margin-right: -10px;
    padding-left: 16px;
    min-width: 0;
    font: 12px 'Open Sans', 'Noto Sans', sans-serif;
    color: #222;
  }
  .tab::before,
  .tab::after {
    content: '';
    position: absolute;
    inset: 0;
    background: #69788b;
    clip-path: polygon(0 100%, 9px 4px, 12px 0, calc(100% - 12px) 0, calc(100% - 9px) 4px, 100% 100%);
  }
  .tab::after {
    inset: 1px 1px 0;
    background: #aab5c4;
  }
  .tab.current::after {
    background: #f2f2f2;
  }
  .tab > :global(*) {
    position: relative;
    z-index: 1;
  }
  .tab-title {
    width: 22px;
    margin-left: 6px;
    overflow: hidden;
    white-space: nowrap;
    mask-image: linear-gradient(90deg, #000 70%, transparent);
  }
  .tab-close {
    margin-left: 5px;
    color: #4c5561;
  }
  .new-tab {
    width: 28px;
    height: 15px;
    margin: 8px 20px 0 4px;
    background: #a9b4c6;
    border-radius: 3px;
    transform: skewX(18deg);
  }
  .window-controls {
    display: flex;
    height: 18px;
    margin-right: 2px;
  }
  .window-controls button {
    border: 1px solid #b9c6d8;
    border-top: 0;
    background: linear-gradient(#7c93b4, #32507c 50%, #4a688f);
    color: #fff;
  }
  .window-controls .profile {
    width: 51px;
    margin-right: 3px;
    border-radius: 0 0 4px 4px;
    font: 11px 'Open Sans', sans-serif;
    background: linear-gradient(#4a5a70, #6c7c92);
  }
  .win {
    width: 28px;
  }
  .win i {
    width: 10px;
    height: 4px;
    background: #fff;
  }
  .win.max i {
    height: 10px;
    background: none;
    border: 2px solid #fff;
  }
  .window-controls .close {
    width: 48px;
    border-radius: 0 0 4px 0;
    background: linear-gradient(#dd9a8a, #c0341e 50%, #d8583a);
  }
  .addressbar {
    display: flex;
    align-items: center;
    gap: 12px;
    height: 37px;
    flex: none;
    padding: 0 10px;
    background: #f2f2f2;
    border-bottom: 1px solid #b4b4b4;
    font: 14px Roboto, 'Open Sans', sans-serif;
  }
  .omnibox {
    flex: 1;
    display: flex;
    align-items: center;
    height: 28px;
    padding: 0 6px 0 7px;
    margin-right: -2px;
    border: 1px solid #a6a6a6;
    border-radius: 3px;
    background: #fff;
    min-width: 0;
  }
  .omnibox > .secure {
    margin: 0 7px 0 6px;
    padding-right: 9px;
    border-right: 1px solid #aaa;
  }
  .secure {
    color: #0b8043;
  }
  .url {
    flex: 1;
    color: #808080;
  }
  .url b {
    font-weight: normal;
    color: #000;
  }

  /* page */
  .viewport {
    flex: 1;
    display: flex;
    min-height: 0;
  }
  .page {
    flex: 1;
    display: flex;
    flex-direction: column;
    min-width: 0;
  }
  .navbar {
    display: flex;
    align-items: center;
    gap: 20px;
    height: 31px;
    flex: none;
    padding: 0 22px 1px 24px;
    background: #10223e;
    color: #636e81;
    font-size: 15px;
  }
  .brand {
    margin-right: 3px;
  }
  .site {
    display: flex;
    align-items: center;
    gap: 5px;
    margin-left: auto;
    color: #dfe3e8;
  }
  .account {
    display: flex;
    align-items: center;
    gap: 8px;
    margin-left: 6px;
  }
  .account .caret {
    border-top-color: #060d18;
  }
  .subhead {
    display: flex;
    align-items: center;
    gap: 10px;
    height: 51px;
    flex: none;
    padding: 0 25px 1px;
    background: #efefef;
    border-bottom: 1px solid #d8d8d8;
    font-size: 12px;
  }
  .action {
    height: 27px;
    border: 1px solid #b3b3b3;
    border-radius: 3px;
    background: #f3f3f3;
    overflow: hidden;
  }
  .action span {
    display: flex;
    align-items: center;
    justify-content: center;
    align-self: stretch;
    width: 29px;
    background: #e6e6e6;
    border-right: 1px solid #b3b3b3;
  }
  .action em {
    font-style: normal;
    padding: 0 10px 0 8px;
  }
  .action em.tight {
    padding: 0 10px 0 6px;
  }
  .save {
    width: 148px;
    height: 27px;
    gap: 4px;
    border: 1px solid #3d8b40;
    border-radius: 3px;
    background: #46a546;
    color: #fff;
  }
  .content {
    flex: 1;
    min-height: 0;
    overflow: hidden;
    display: grid;
    grid-template-columns: repeat(3, minmax(0, 1fr));
    align-content: start;
    align-items: start;
    gap: 12px 10px;
    padding: 0 30px;
  }
  .panel {
    border: 1px solid #d3d3d3;
    border-radius: 10px;
    background: #fbfbfb;
    padding-bottom: 6px;
    min-width: 0;
  }
  .panel.cut {
    border-top: 0;
    border-radius: 0 0 10px 10px;
  }
  .panel h2 {
    margin: 0;
    height: 28px;
    font-size: 13px;
    line-height: 28px;
    text-align: center;
    border-radius: 9px 9px 0 0;
    background: linear-gradient(#f9f9f9, #e0e0e0);
  }
  .row {
    display: flex;
    align-items: flex-start;
    min-height: 28px;
    margin-bottom: 10px;
  }
  .row > label,
  .label {
    width: 130px;
    flex: none;
    padding-top: 2px;
    margin-right: 5px;
    text-align: right;
    font-weight: bold;
    white-space: nowrap;
  }
  .row > .low {
    padding-top: 6px;
  }
  input,
  textarea {
    min-width: 0;
    height: 28px;
    padding: 0 6px;
    border: 1px solid #ccc;
    border-radius: 3px;
    background: #fff;
    color: #555;
  }
  .row > input,
  textarea {
    flex: 1;
  }
  textarea {
    height: 46px;
  }
  .group {
    display: flex;
    width: 157px;
  }
  .group input {
    flex: 1;
    border-right: 0;
    border-radius: 3px 0 0 3px;
  }
  .group button {
    width: 43px;
    height: 28px;
    padding-bottom: 3px;
    border: 1px solid #b3b3b3;
    border-radius: 0 3px 3px 0;
    background: #f3f3f3;
  }
  .group.wide {
    width: 219px;
    margin-left: 2px;
  }
  .chosen {
    flex: 1;
    display: flex;
    align-items: center;
    height: 26px;
    padding: 0 5px;
    border: 1px solid #ccc;
    border-radius: 3px;
    background: #fff;
  }
  .tag {
    display: flex;
    align-items: center;
    gap: 5px;
    height: 19px;
    padding: 0 4px 0 5px;
    border: 1px solid #aaa;
    border-radius: 3px;
    background: linear-gradient(#f4f4f4, #e6e6e6);
    font-size: 12px;
  }
  .tag button {
    color: #888;
    padding-top: 2px;
  }

  .product {
    padding: 20px 25px 13px 0;
  }
  .product .spaced {
    margin-bottom: 12px;
  }
  .product .row:nth-child(4),
  .product .row:nth-child(5) {
    margin-bottom: 8px;
  }
  .product .close {
    margin-bottom: 6px;
  }
  .pills {
    display: flex;
    flex-direction: column;
    align-items: flex-start;
    gap: 6px;
    width: 220px;
    padding: 3px 5px;
    border: 1px solid #ccc;
    border-radius: 3px;
    background: #fff;
  }
  .pill {
    display: flex;
    align-items: center;
    gap: 5px;
    height: 21px;
    padding: 0 6px;
    border-radius: 2px;
    background: #3071a9;
    color: #fff;
  }
  .pill .icon {
    width: 14px;
    height: 14px;
  }
  .switch {
    display: flex;
    height: 25px;
  }
  .switch label {
    display: flex;
    align-items: center;
    padding: 0 12px;
    border: 1px solid #b3b3b3;
    border-radius: 0 3px 3px 0;
    background: #f3f3f3;
  }
  .switch label:first-child {
    border-radius: 3px 0 0 3px;
    border-right: 0;
  }
  .switch label.on {
    background: #46a546;
    border-color: #3d8b40;
    color: #fff;
  }
  .switch input {
    position: absolute;
    opacity: 0;
    width: 0;
    height: 0;
  }

  .media {
    padding: 9px 15px 11px 12px;
  }
  .drop {
    border: 2px solid #e5e5e5;
    background: #fff;
    padding: 10px 4px;
  }
  .drop.images {
    height: 112px;
    border-radius: 4px 4px 0 0;
  }
  .drop.files {
    height: 132px;
    border-radius: 0 0 4px 4px;
  }
  .drop-tools {
    display: flex;
    justify-content: flex-end;
    gap: 5px;
  }
  .drop p {
    margin: 21px 0 0;
    text-align: center;
  }
  .drop.files p {
    margin-top: 41px;
  }
  .square {
    width: 28px;
    height: 29px;
    border: 1px solid #ccc;
    border-radius: 5px;
    background: linear-gradient(#fff, #ececec);
  }

  .prices {
    padding: 21px 10px 29px 0;
  }
  .prices .tax {
    margin-bottom: 8px;
  }
  .row > .retail {
    flex: none;
    width: 221px;
  }
  .currency {
    margin: 5px 0 0 28px;
  }
  .picker {
    display: flex;
    height: 28px;
    border: 1px solid #ccc;
    border-radius: 3px;
    background: #fff;
    color: #444;
  }
  .picker select {
    flex: 1;
    min-width: 0;
    appearance: none;
    border: 0;
    background: none;
    padding: 0 7px;
  }
  .picker-arrow {
    display: flex;
    align-items: center;
    justify-content: center;
    width: 28px;
    flex: none;
    border-left: 1px solid #ccc;
    background: #f3f3f3;
  }
  :global(.p-tax) {
    width: 220px;
  }
  :global(.p-unit) {
    width: 93px;
    margin: 1px 0 0 4px;
  }
  :global(.p-cm) {
    width: 60px;
  }
  .picker:global(.p-cm) select {
    padding-right: 0;
  }
  .price-box {
    margin: 29px 0 0 10px;
    padding-bottom: 19px;
    border: 1px solid #ccc;
    border-radius: 4px;
  }
  table {
    width: 100%;
    border-collapse: collapse;
  }
  th {
    height: 47px;
    padding: 12px 0 0 8px;
    text-align: left;
    border-bottom: 1px solid #ddd;
  }
  th.tools {
    padding: 0 0 0 37px;
  }
  th:first-child {
    width: 56%;
  }
  td {
    height: 40px;
    padding: 0 0 6px 9px;
    background: #f9f9f9;
  }
  .tools {
    width: 88px;
  }
  td.tools {
    padding-left: 36px;
  }
  td.tools button {
    display: inline-flex;
    margin-right: 9px;
  }

  /* editor */
  .editor-tabs {
    display: flex;
    align-items: flex-end;
    height: 53px;
    margin: 0 -6px 8px 15px;
    padding-right: 5px;
    border-bottom: 1px solid #ddd;
    font-size: 12px;
  }
  .toggle {
    margin: 0 auto 8px 8px;
  }
  .etab {
    height: 38px;
    padding: 0 14px;
    margin-bottom: -1px;
    border: 1px solid transparent;
  }
  .etab.current {
    padding: 0 11px;
    border-color: #ddd #ddd #fff;
    border-radius: 4px 4px 0 0;
    background: #fff;
    color: #555;
  }
  .etab:last-child {
    padding: 0 9px 0 12px;
  }
  .editor {
    margin: 0 -6px 24px 15px;
    border: 1px solid #ccc;
    position: relative;
    background: #fff;
  }
  .tools-area {
    display: flex;
    flex-direction: column;
    gap: 2px;
    padding: 1px;
    background: #f4f4f4;
    border-bottom: 1px solid #ccc;
  }
  .tool-row {
    display: flex;
    align-items: center;
    gap: 2px;
  }
  .tool {
    width: 26px;
    height: 26px;
    border: 1px solid #d6d6d6;
    border-radius: 2px;
    background: #f4f4f4;
  }
  .tool span {
    flex: 1;
    display: flex;
    align-items: center;
    justify-content: center;
  }
  .tool b {
    display: flex;
    align-items: center;
    justify-content: center;
    align-self: stretch;
    width: 15px;
    border-left: 1px solid #d6d6d6;
  }
  .tool.split {
    width: 41px;
  }
  .tool.list {
    width: 93px;
    font-size: 12px;
    color: #000;
    background: #fff;
  }
  .tool.list span {
    justify-content: flex-start;
    padding-left: 2px;
  }
  .tool.list b {
    background: #f4f4f4;
  }
  .tool.off span,
  .tool.off b i {
    opacity: 0.35;
  }
  .tool.active {
    background: #ddd;
    border-color: #bbb;
  }
  .sep {
    width: 1px;
    height: 24px;
    margin: 0 2px;
    background: #d3d3d3;
  }
  .canvas {
    height: 100px;
    outline: 0;
  }
  .path {
    display: flex;
    align-items: center;
    height: 31px;
    padding: 0 4px 0 6px;
    border-top: 1px solid #ccc;
    background: #f4f4f4;
    font-size: 14px;
  }
  .path small {
    font-size: 12px;
  }
  .words {
    margin-left: auto;
  }
  .grip {
    width: 11px;
    height: 11px;
    margin: 10px 0 0 12px;
  }
  .insert-row {
    display: flex;
    gap: 5px;
  }
  .insert-row + .insert-row {
    padding-left: 5px;
  }
  .insert {
    height: 28px;
    gap: 6px;
    padding: 0 13px;
    border: 1px solid #b3b3b3;
    border-radius: 3px;
    background: #f3f3f3;
  }

  .seo .row,
  .limits .row {
    padding-right: 16px;
  }
  .seo h2,
  .limits h2 {
    margin-bottom: 22px;
  }
  .seo {
    padding-bottom: 19px;
  }
  .seo .tall {
    margin-bottom: 17px;
  }

  .limits {
    padding-bottom: 13px;
  }
  .limits .apart {
    margin-bottom: 14px;
  }
  .limits .dates {
    margin-bottom: 7px;
  }
  .row > .qty {
    flex: none;
    width: 157px;
    margin: 1px 0 0 2px;
  }
  .row > .to {
    width: auto;
    margin: 7px 7px 0;
  }
  .dates > .low + .group {
    margin-left: 2px;
  }
  .limits .access {
    margin-bottom: 2px;
  }
  .tree {
    padding-top: 3px;
    font-size: 10px;
  }
  .tree label {
    display: flex;
    align-items: center;
    gap: 4px;
    height: 18px;
  }
  .tree input {
    width: 12px;
    height: 12px;
    accent-color: #777;
    margin: 0 0 0 1px;
  }
  .expand {
    width: 9px;
    height: 9px;
    margin-left: 4px;
    border: 1px solid #777;
    font: 10px 'Liberation Sans', sans-serif;
    line-height: 7px;
    text-align: center;
    background: #fff;
  }
  .limits .store {
    padding-right: 30px;
    margin-bottom: 16px;
  }
  .limits .weight {
    margin-bottom: 5px;
  }
  .row > .short {
    flex: none;
    width: 92px;
  }
  .volume {
    gap: 3px;
  }
  .row.volume > .label {
    margin-right: 3px;
  }
  .addon {
    display: flex;
    width: 93px;
  }
  .addon span {
    display: flex;
    align-items: center;
    justify-content: center;
    width: 29px;
    flex: none;
    border: 1px solid #ccc;
    border-right: 0;
    border-radius: 3px 0 0 3px;
    background: #eee;
  }
  .addon input {
    flex: 1;
    border-radius: 0 3px 3px 0;
  }

  .status {
    display: flex;
    align-items: center;
    height: 28px;
    flex: none;
    padding: 0 10px;
    background: #ebebeb;
    border-top: 1px solid #d4d4d4;
    font-size: 12px;
    color: #555;
  }
  .status > a,
  .status > span {
    display: flex;
    align-items: center;
    gap: 4px;
    padding-right: 10px;
    margin-right: 10px;
    line-height: 15px;
    border-right: 1px solid #aaa;
  }
  .status > span {
    gap: 3px;
  }
  .status > a:last-of-type {
    border: 0;
  }
  .status b {
    width: 24px;
    height: 18px;
    margin: -2px 0;
    border-radius: 9px;
    background: #999;
    color: #fff;
    line-height: 18px;
    text-align: center;
  }
  .dash {
    width: 13px;
    height: 3px;
    background: #555;
  }
  .status p {
    margin: 0 0 0 auto;
  }
  .scrollbar {
    position: relative;
    display: flex;
    flex-direction: column;
    align-items: center;
    justify-content: space-between;
    width: 17px;
    padding: 7px 0 5px;
    background: #f1f1f1;
  }
  .scrollbar .arrow {
    border-width: 5px 4px 0;
    border-top-color: #444;
  }
  .scrollbar .arrow.up {
    border-width: 0 4px 5px;
    border-style: solid;
    border-color: transparent;
    border-bottom-color: #555;
  }
  .thumb {
    position: absolute;
    top: 12%;
    bottom: 23%;
    left: 2px;
    right: 2px;
    background: #c1c1c1;
  }
  .edge {
    position: absolute;
    right: 0;
    bottom: 5px;
    width: 4px;
    height: 60px;
    background: #000;
  }

  /* windows taskbar */
  .taskbar {
    display: flex;
    align-items: stretch;
    gap: 3px;
    height: 40px;
    flex: none;
    padding-left: 10px;
    border-top: 1px solid #12385c;
    box-shadow: inset 0 1px #9cc4e4;
    background:
      linear-gradient(30deg, transparent 40%, #a9d0f8 46%, #a9d0f8 54%, transparent 60%) 1285px 0 / 110px 100% no-repeat,
      linear-gradient(90deg, #1a5a8c 0, #2f80b4 60px, #3b9bcb 500px, #2f93ce 750px, #2676bc 1000px, #2068b2 1400px, #1c5a9f 1660px, #153f70 1690px, #12386a);
  }
  .start {
    width: 36px;
    margin-right: 11px;
  }
  .start .icon {
    width: 38px;
    height: 38px;
  }
  .app {
    width: 59px;
    border: 1px solid #123c5c;
    border-radius: 3px;
    box-shadow: inset 0 0 0 1px #a5d2ea;
    background: linear-gradient(120deg, #8cc4e2, #4a9fce);
  }
  .app.focused {
    background: linear-gradient(120deg, #e6f3fa, #8cc6e4);
  }
  .tray {
    display: flex;
    align-items: center;
    gap: 8px;
    margin-left: auto;
    font: 12px 'Open Sans', sans-serif;
    color: #fff;
  }
  .lang {
    margin: 0 7px 5px 0;
  }
  .caret-up {
    margin-right: 5px;
    border: 4px solid transparent;
    border-top: 0;
    border-bottom-color: #fff;
  }
  .clock {
    display: flex;
    flex-direction: column;
    align-items: center;
    font-size: 11px;
    line-height: 17px;
    margin-left: 8px;
  }
  .desktop {
    width: 15px;
    align-self: stretch;
    margin-left: 4px;
    border: 1px solid #5c86ac;
    background: linear-gradient(#34618f, #16406e);
  }
</style>
